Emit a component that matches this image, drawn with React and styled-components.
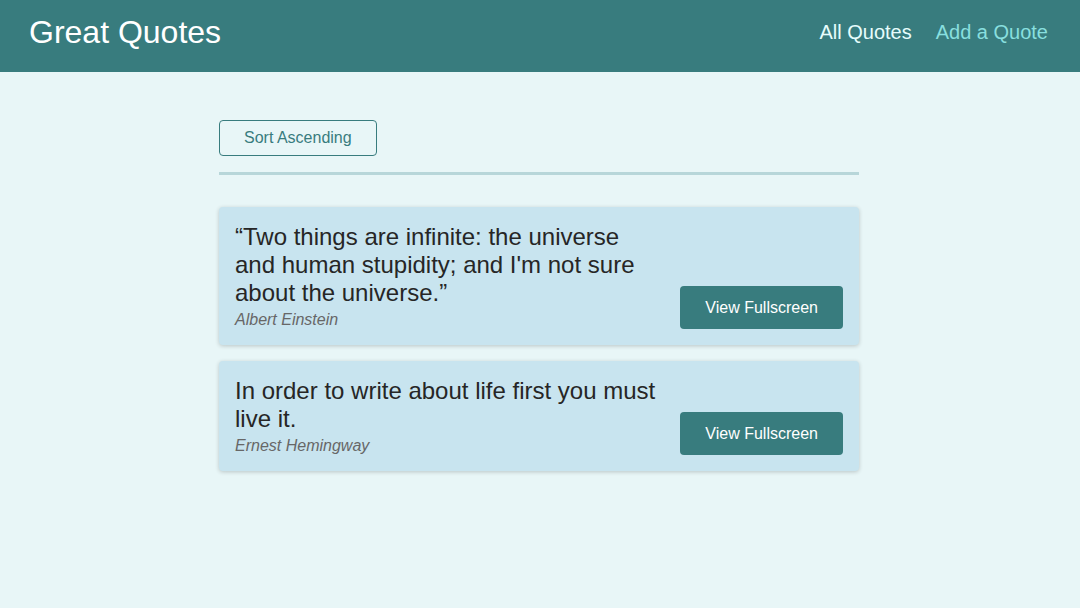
import React from 'react';
import styled, { createGlobalStyle } from 'styled-components';

const GlobalStyle = createGlobalStyle`
  * {
    box-sizing: border-box;
  }

  body {
    margin: 0;
    background: #e8f6f7;
    font-family: 'Liberation Sans', Arial, sans-serif;
  }
`;

const Header = styled.header`
  height: 72px;
  display: flex;
  align-items: center;
  justify-content: space-between;
  padding: 0 32px 8px 29px;
  background: #387c7e;
`;

const Logo = styled.div`
  font-size: 32px;
  color: #ffffff;
`;

const Nav = styled.nav`
  display: flex;
  gap: 24px;
`;

const NavLink = styled.a`
  font-size: 20px;
  text-decoration: none;
  color: ${(p) => (p.$active ? '#e6fcfc' : '#88dfdf')};
  cursor: pointer;
`;

const Main = styled.main`
  width: 640px;
  margin: 48px 0 0 calc(50% - 321px);
`;

const Sorting = styled.div`
  padding-bottom: 16px;
  border-bottom: 3px solid #b7d6d9;
  margin-bottom: 32px;
`;

const OutlineButton = styled.button`
  font: inherit;
  font-size: 16px;
  color: #387c7e;
  background: transparent;
  border: 1px solid #387c7e;
  border-radius: 4px;
  padding: 8px 24px;
  cursor: pointer;
`;

const List = styled.ul`
  list-style: none;
  margin: 0;
  padding: 0;
`;

const Item = styled.li`
  display: flex;
  justify-content: space-between;
  align-items: flex-end;
  margin: 16px 0;
  padding: 16px;
  border-radius: 4px;
  background: #c8e4ef;
  box-shadow: 0 1px 4px rgba(0, 0, 0, 0.2);
`;

const Figure = styled.figure`
  flex: 1;
  margin: 0 20px 0 0;
`;

const Quote = styled.blockquote`
  margin: 0;
  font-size: 24px;
  color: #262626;
`;

const Author = styled.figcaption`
  margin-top: 4px;
  font-size: 16px;
  font-style: italic;
  color: #676767;
`;

const SolidButton = styled.button`
  font: inherit;
  font-size: 16px;
  line-height: 19px;
  color: #ffffff;
  background: #387c7e;
  border: none;
  border-radius: 4px;
  padding: 12px 25px;
  cursor: pointer;
  flex-shrink: 0;
`;

const quotes = [
  {
    id: 'q1',
    text: '\u201CTwo things are infinite: the universe and human stupidity; and I\'m not sure about the universe.\u201D',
    author: 'Albert Einstein',
  },
  {
    id: 'q2',
    text: 'In order to write about life first you must live it.',
    author: 'Ernest Hemingway',
  },
];

const App = () => {
  return (
    <>
      <GlobalStyle />
      <Header>
        <Logo>Great Quotes</Logo>
        <Nav>
          <NavLink $active>All Quotes</NavLink>
          <NavLink>Add a Quote</NavLink>
        </Nav>
      </Header>
      <Main>
        <Sorting>
          <OutlineButton>Sort Ascending</OutlineButton>
        </Sorting>
        <List>
          {quotes.map((q) => (
            <Item key={q.id}>
              <Figure>
                <Quote>{q.text}</Quote>
                <Author>{q.author}</Author>
              </Figure>
              <SolidButton>View Fullscreen</SolidButton>
            </Item>
          ))}
        </List>
      </Main>
    </>
  );
};

export default App;
